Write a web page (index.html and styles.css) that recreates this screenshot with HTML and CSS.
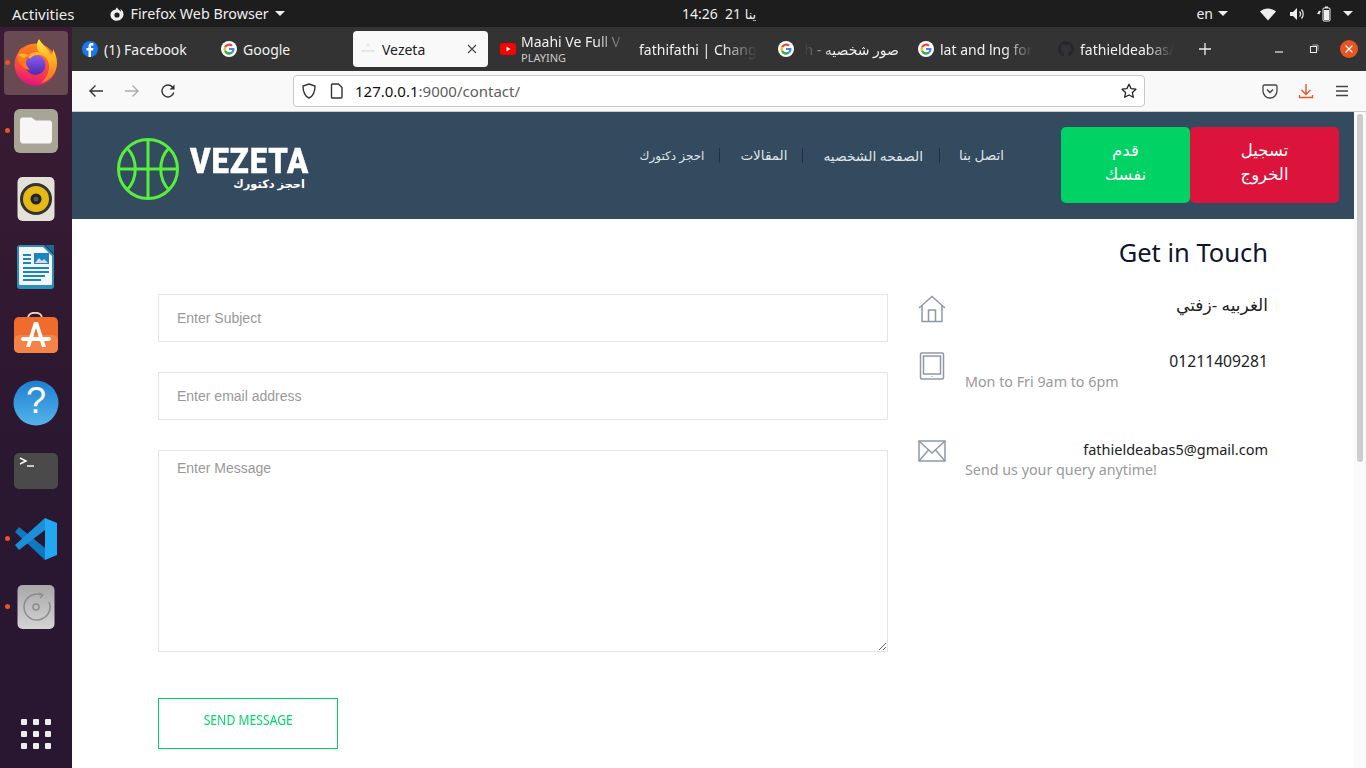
FILE: index.html
```html
<!DOCTYPE html>
<html lang="en">
<head>
    <meta charset="UTF-8">
    <meta name="viewport" content="width=device-width, initial-scale=1.0">
    <title>Vezeta</title>
    <link rel="stylesheet" href="styles.css">
</head>
<body>

    <!-- Top bar -->
    <div class="topbar">
        <div class="topbar-left">
            <span class="activities">Activities</span>
            <span class="app-menu">
                <svg class="app-icon" viewBox="0 0 16 16" width="16" height="16"><path d="M8 1.5c-1 .6-1.300 1.400-1.200 2.200C4.400 3.500 2 5.400 1.500 8c-.5 3.500 2.300 6.800 6.300 6.800 3.700 0 6.700-3 6.700-6.500 0-2.500-1.300-4.600-3.400-5.600.7 1 1 2.100.8 3C11 4.300 9.200 3.800 8 1.500z" fill="#eee"/><circle cx="8" cy="9" r="2.600" fill="#1d1d1d"/></svg>
                <span class="app-name">Firefox Web Browser</span>
                <i class="caret"></i>
            </span>
        </div>
        <div class="clock">14:26 &nbsp;21 <span class="clock-ar">ينا</span></div>
        <div class="topbar-right">
            <span class="lang">en <i class="caret"></i></span>
            <svg class="tray-wifi" viewBox="0 0 16 14" width="16" height="14"><path d="M0 4.500C4.500.5 11.500.5 16 4.500L8 13.500z" fill="#eee"/></svg>
            <svg class="tray-sound" viewBox="0 0 16 14" width="16" height="14"><path d="M1 5h3l4-4v12l-4-4H1z" fill="#eee"/><path d="M10.500 4.500c1.300 1.400 1.300 3.600 0 5M12.500 2.500c2.300 2.500 2.300 6.500 0 9" fill="none" stroke="#eee" stroke-width="1.200"/></svg>
            <svg class="tray-battery" viewBox="0 0 14 16" width="14" height="16"><path d="M3 3 0 8h2v1l2-4H2z" fill="#eee"/><rect x="6" y="2" width="7" height="13" rx="1" fill="none" stroke="#eee"/><rect x="8" y="0.500" width="3" height="1.500" fill="#eee"/><rect x="7" y="4" width="5" height="10" fill="#eee"/></svg>
            <i class="caret"></i>
        </div>
    </div>

    <div class="desktop">
        <!-- Dock -->
        <div class="dock">
            <div class="dock-item dock-active running">
                <svg viewBox="0 0 48 48" width="48" height="48">
                    <defs>
                        <linearGradient id="ffBody" x1="0.600" y1="0" x2="0.400" y2="1"><stop offset="0" stop-color="#ff8a16"/><stop offset="0.550" stop-color="#ff4a3d"/><stop offset="1" stop-color="#e3137f"/></linearGradient>
                        <linearGradient id="ffFlame" x1="0.400" y1="0" x2="0.600" y2="1"><stop offset="0" stop-color="#ffe13c"/><stop offset="0.600" stop-color="#ffa81f"/><stop offset="1" stop-color="#ff6a1f"/></linearGradient>
                        <linearGradient id="ffInner" x1="0.500" y1="0" x2="0.500" y2="1"><stop offset="0" stop-color="#8f5df2"/><stop offset="1" stop-color="#4a2bb0"/></linearGradient>
                    </defs>
                    <circle cx="23.500" cy="25.500" r="21" fill="url(#ffBody)"/>
                    <path d="M27 0c-3 5-3 10 1 14 6 3 10 9 9 16-1 6-4 10-8 14 9-2 16-10 16-20 0-6-2-10-4-14 0 3-1 5-2 6C37 10 31 7 27 0z" fill="url(#ffFlame)"/>
                    <circle cx="23.500" cy="26" r="10" fill="url(#ffInner)"/>
                    <path d="M16 17c3-4 9-5 13-3 4 1 7 4 8 8-3-4-8-7-12-6-3 0-6 2-7 4z" fill="#ffb52e"/>
                    <path d="M10.500 8c-1 3-1 6 0 8 2-1 6-1 8.500 0-2 1-4 2-5 4-1 4 1 8 4 11-6-1-10-5-12-11-1-4 1-9 4.500-12z" fill="#ff7a1a"/>
                    <path d="M6 16c3-2 7-2 11 0-2 1-4 2-5 3-2-1-4-2-6-3z" fill="#ffb52e"/>
                </svg>
            </div>
            <div class="dock-item running">
                <svg viewBox="0 0 46 46" width="46" height="46">
                    <rect x="1" y="1" width="44" height="44" rx="6" fill="#a8a596"/>
                    <path d="M7 12c0-1.500 1-2.500 2.500-2.500h9l4 3h14c1.500 0 2.500 1 2.500 2.500v17c0 2-1 3.500-3 3.500H10c-2 0-3-1.500-3-3.500z" fill="#f7f6f4"/>
                </svg>
            </div>
            <div class="dock-item">
                <svg viewBox="0 0 38 46" width="38" height="46">
                    <rect x="0.500" y="1" width="37" height="44" rx="5" fill="#e4e1d8"/>
                    <circle cx="19" cy="23" r="16" fill="#333"/>
                    <circle cx="19" cy="23" r="13" fill="#e6b914"/>
                    <circle cx="19" cy="23" r="5.500" fill="#222"/>
                    <circle cx="19" cy="23" r="2.500" fill="#555"/>
                </svg>
            </div>
            <div class="dock-item">
                <svg viewBox="0 0 38 46" width="38" height="46">
                    <path d="M3 1h24l10 10v31c0 2-1 3-3 3H3c-2 0-3-1-3-3V4c0-2 1-3 3-3z" fill="#2a8fbd"/>
                    <path d="M3 3h23l9 9v28c0 1-1 1-2 1H4c-1 0-2 0-2-1V4c0-1 0-1 1-1z" fill="#f4f6f7"/>
                    <path d="M28 1h9v9z" fill="#1b6a90"/>
                    <path d="M6 10h8v2H6zM6 14h8v2H6zM6 18h8v2H6zM6 23h26v2H6zM6 27h26v2H6zM6 31h22v2H6zM6 35h18v2H6z" fill="#1a86c0"/>
                    <rect x="17" y="9" width="15" height="11" fill="#1a86c0"/>
                    <path d="M18 19l4-5 3 3 2-2 4 4z" fill="#ddd"/>
                </svg>
            </div>
            <div class="dock-item">
                <svg viewBox="0 0 46 46" width="46" height="46">
                    <path d="M15 6c0-7 14-7 14 0" fill="none" stroke="#ecd6bc" stroke-width="2"/>
                    <rect x="1" y="5" width="44" height="36" rx="5" fill="#ef6c2c"/>
                    <rect x="1" y="23" width="44" height="18" rx="5" fill="#f58347"/>
                    <path d="M21 10h4l8 25h-4l-6-19-6 19h-4z" fill="#fff"/>
                    <rect x="8" y="25" width="30" height="4" rx="2" fill="#fff"/>
                </svg>
            </div>
            <div class="dock-item">
                <svg viewBox="0 0 46 46" width="46" height="46">
                    <defs><linearGradient id="helpBg" x1="0" y1="0" x2="0" y2="1"><stop offset="0" stop-color="#1c7fd0"/><stop offset="1" stop-color="#55b4ea"/></linearGradient></defs>
                    <circle cx="23" cy="23" r="22.500" fill="url(#helpBg)"/>
                    <text class="help-mark" x="23" y="33" text-anchor="middle">?</text>
                </svg>
            </div>
            <div class="dock-item">
                <svg viewBox="0 0 46 38" width="46" height="38">
                    <rect x="1" y="1" width="44" height="36" rx="5" fill="#4a4a4a"/>
                    <path d="M7 6l6 3-6 3" fill="none" stroke="#fff" stroke-width="1.400"/>
                    <path d="M14 14h7" stroke="#fff" stroke-width="1.400"/>
                </svg>
            </div>
            <div class="dock-item running">
                <svg viewBox="0 0 44 44" width="44" height="44">
                    <path d="M1 15l4-5 26 21v12z" fill="#0f78c0"/>
                    <path d="M31 1 1 28l4 5 26-20z" fill="#1b8fd8"/>
                    <path d="M31 1 43 6v32l-12 5z" fill="#22a7f2"/>
                </svg>
            </div>
            <div class="dock-item running">
                <svg viewBox="0 0 38 46" width="38" height="46">
                    <defs><linearGradient id="diskBg" x1="0" y1="0" x2="0" y2="1"><stop offset="0" stop-color="#a8a8a8"/><stop offset="1" stop-color="#d4d4d4"/></linearGradient></defs>
                    <rect x="0.500" y="1" width="37" height="44" rx="5" fill="url(#diskBg)"/>
                    <path d="M25 11a13 13 0 1 0 7 7" fill="none" stroke="#8c8c8c" stroke-width="1.500"/>
                    <path d="M22 9l4 2-3 3" fill="none" stroke="#8c8c8c" stroke-width="1.200"/>
                    <circle cx="19" cy="23" r="3" fill="none" stroke="#8c8c8c" stroke-width="1.500"/>
                </svg>
            </div>
            <div class="dock-grid">
                <i></i><i></i><i></i><i></i><i></i><i></i><i></i><i></i><i></i>
            </div>
        </div>

        <div class="browser">
            <!-- Tabs -->
            <div class="tabs">
                <div class="tab">
                    <svg class="fav" viewBox="0 0 16 16" width="16" height="16"><circle cx="8" cy="8" r="8" fill="#1877f2"/><path d="M9 16V9.500h2l.4-2.500H9V5.600c0-.8.3-1.200 1.200-1.200h1.200V2.200C11 2.100 10.400 2 9.700 2 7.800 2 6.500 3.200 6.500 5.300V7h-2v2.500h2V16z" fill="#fff"/></svg>
                    <span class="tab-title">(1) Facebook</span>
                </div>
                <div class="tab">
                    <svg class="fav" viewBox="0 0 16 16" width="16" height="16"><use href="#gicon"/></svg>
                    <span class="tab-title">Google</span>
                </div>
                <div class="tab tab-current">
                    <svg class="fav" viewBox="0 0 16 16" width="16" height="16"><circle cx="8" cy="4" r="1.500" fill="#e6e6e6"/><path d="M1 9h14v2H1z" fill="#e6e6e6"/></svg>
                    <span class="tab-title tab-title-current">Vezeta</span>
                    <svg class="tab-close" viewBox="0 0 10 10" width="10" height="10"><path d="M1 1l8 8M9 1l-8 8" stroke="#444" stroke-width="1.100"/></svg>
                </div>
                <div class="tab tab-media">
                    <svg class="fav" viewBox="0 0 16 16" width="16" height="16"><rect y="2" width="16" height="12" rx="3" fill="#f00"/><path d="M6.500 5.500v5l4-2.500z" fill="#fff"/></svg>
                    <span class="tab-stack">
                        <span class="tab-title fade">Maahi Ve Full V</span>
                        <span class="tab-sub">PLAYING</span>
                    </span>
                </div>
                <div class="tab tab-nofav">
                    <span class="tab-title fade">fathifathi | Chang</span>
                </div>
                <div class="tab tab-wide">
                    <svg class="fav" viewBox="0 0 16 16" width="16" height="16"><use href="#gicon"/></svg>
                    <span class="tab-title fade-start" dir="ltr">h - صور شخصيه</span>
                </div>
                <div class="tab tab-wide">
                    <svg class="fav" viewBox="0 0 16 16" width="16" height="16"><use href="#gicon"/></svg>
                    <span class="tab-title fade">lat and lng for</span>
                </div>
                <div class="tab">
                    <svg class="fav" viewBox="0 0 16 16" width="16" height="16"><path d="M8 0a8 8 0 0 0-2.500 15.600c.4.100.5-.2.500-.4v-1.400c-2.200.5-2.700-1-2.700-1-.4-.9-.9-1.200-.9-1.200-.7-.5.100-.5.100-.5.800.1 1.200.8 1.200.8.700 1.200 1.900.9 2.300.7.100-.5.300-.9.500-1.100-1.800-.2-3.600-.9-3.600-4 0-.9.300-1.600.8-2.100-.1-.2-.4-1 .1-2.100 0 0 .7-.2 2.200.8a7.600 7.600 0 0 1 4 0c1.500-1 2.200-.8 2.200-.8.400 1.100.2 1.900.1 2.100.5.600.8 1.300.8 2.100 0 3.100-1.900 3.700-3.700 3.900.3.300.6.800.6 1.500v2.200c0 .2.100.5.600.4A8 8 0 0 0 8 0z" fill="#24292e"/></svg>
                    <span class="tab-title fade">fathieldeabas/</span>
                </div>
                <svg class="tab-new" viewBox="0 0 14 14" width="14" height="14"><path d="M7 1v12M1 7h12" stroke="#eee" stroke-width="1.300"/></svg>
                <div class="win-controls">
                    <svg class="win-min" viewBox="0 0 10 10" width="10" height="10"><path d="M1 8h8" stroke="#eee" stroke-width="1.200"/></svg>
                    <svg class="win-max" viewBox="0 0 10 10" width="10" height="10"><rect x="1.500" y="2.500" width="6" height="6" fill="none" stroke="#eee"/><path d="M3.500 1h5.500v5.500" fill="none" stroke="#aaa"/></svg>
                    <span class="win-close">
                        <svg viewBox="0 0 10 10" width="10" height="10"><path d="M1.500 1.500l7 7M8.500 1.500l-7 7" stroke="#fff" stroke-width="1.200"/></svg>
                    </span>
                </div>
            </div>

            <!-- Toolbar -->
            <div class="toolbar">
                <svg class="tool tool-back" viewBox="0 0 16 16" width="16" height="16"><path d="M15 8H2M7.500 2.500 2 8l5.500 5.500" fill="none" stroke="#333" stroke-width="1.400"/></svg>
                <svg class="tool tool-fwd" viewBox="0 0 16 16" width="16" height="16"><path d="M1 8h13M8.500 2.500 14 8l-5.500 5.500" fill="none" stroke="#aaa" stroke-width="1.400"/></svg>
                <svg class="tool tool-reload" viewBox="0 0 16 16" width="16" height="16"><path d="M13.800 9.500A6 6 0 1 1 12.500 4L14 5.500" fill="none" stroke="#333" stroke-width="1.400"/><path d="M14.500 1.500v5h-5z" fill="#333"/></svg>
                <div class="urlbar">
                    <svg class="url-shield" viewBox="0 0 16 16" width="16" height="16"><path d="M8 1l6 2c0 6-1.500 10-6 12C3.500 13 2 9 2 3z" fill="none" stroke="#333" stroke-width="1.400"/></svg>
                    <svg class="url-page" viewBox="0 0 14 16" width="14" height="16"><path d="M2.500 1h6l3.500 3.500V14a1 1 0 0 1-1 1h-8.500a1 1 0 0 1-1-1V2a1 1 0 0 1 1-1z" fill="none" stroke="#333" stroke-width="1.400"/></svg>
                    <span class="url-text"><b>127.0.0.1</b>:9000/contact/</span>
                    <svg class="url-star" viewBox="0 0 16 16" width="16" height="16"><path d="M8 1.200l2.100 4.400 4.800.6-3.500 3.300.9 4.800L8 12l-4.300 2.300.9-4.800L1.100 6.200l4.800-.6z" fill="none" stroke="#222" stroke-width="1.300" stroke-linejoin="round"/></svg>
                </div>
                <div class="tool-right">
                    <svg viewBox="0 0 16 16" width="16" height="16"><path d="M2.500 2h11a1.500 1.500 0 0 1 1.500 1.500V8a7 7 0 0 1-14 0V3.500A1.500 1.500 0 0 1 2.500 2z" fill="none" stroke="#444" stroke-width="1.300"/><path d="M5 6.500 8 9.500l3-3" fill="none" stroke="#444" stroke-width="1.500"/></svg>
                    <svg viewBox="0 0 16 16" width="16" height="16"><path d="M8 1v10M3.500 7 8 11.500 12.500 7M1.500 12v2.500h13V12" fill="none" stroke="#e8572a" stroke-width="1.400"/></svg>
                    <svg viewBox="0 0 16 16" width="16" height="16"><path d="M2 3.500h12M2 8h12M2 12.500h12" stroke="#444" stroke-width="1.400"/></svg>
                </div>
            </div>

            <!-- Page -->
            <div class="viewport">
                <div class="page">
                    <header class="site-header">
                        <div class="logo">
                            <svg class="logo-ball" viewBox="0 0 64 64" width="64" height="64" fill="none" stroke="#54f03c" stroke-width="3">
                                <circle cx="32" cy="32" r="29.500"/>
                                <path d="M32 2.500v59M2.500 32h59"/>
                                <path d="M11 11c11 11 11 31 0 42M53 11c-11 11-11 31 0 42"/>
                            </svg>
                            <div class="logo-text">
                                <span class="logo-name">VEZETA</span>
                                <span class="logo-sub">احجز دكتورك</span>
                            </div>
                        </div>
                        <nav class="nav">
                            <a class="nav-link nav-link-first">اتصل بنا</a>
                            <a class="nav-link nav-link-wide">الصفحه الشخصيه</a>
                            <a class="nav-link">المقالات</a>
                            <a class="nav-link nav-link-small">احجز دكتورك</a>
                        </nav>
                        <div class="header-btns">
                            <a class="btn-green">قدم<br>نفسك</a>
                            <a class="btn-red">تسجيل<br>الخروج</a>
                        </div>
                    </header>

                    <main class="contact">
                        <h2 class="contact-title">Get in Touch</h2>
                        <div class="contact-row">
                            <form class="contact-form">
                                <input class="field" type="text" placeholder="Enter Subject">
                                <input class="field" type="text" placeholder="Enter email address">
                                <textarea class="field field-area" placeholder="Enter Message"></textarea>
                                <button class="send-btn" type="button"><span class="send-label">SEND MESSAGE</span></button>
                            </form>
                            <div class="contact-info">
                                <div class="info-item info-address">
                                    <svg class="info-icon" viewBox="0 0 28 28" width="28" height="28" fill="none" stroke="#8f99a6" stroke-width="1.500"><path d="M1 13 14 1.500 27 13"/><path d="M4 10.500V26.500h20V10.500"/><path d="M10.500 26.500V15h7v11.500"/></svg>
                                    <div class="info-body">
                                        <div class="info-main main-address">الغربيه -زفتي</div>
                                    </div>
                                </div>
                                <div class="info-item info-phone">
                                    <svg class="info-icon" viewBox="0 0 28 28" width="28" height="28" fill="none" stroke="#8f99a6" stroke-width="1.500"><rect x="2.500" y="1" width="23" height="26" rx="1.500"/><rect x="5.500" y="4" width="17" height="18"/><path d="M14 24.200v.8"/></svg>
                                    <div class="info-body">
                                        <div class="info-main main-phone">01211409281</div>
                                        <div class="info-sub">Mon to Fri 9am to 6pm</div>
                                    </div>
                                </div>
                                <div class="info-item">
                                    <svg class="info-icon" viewBox="0 0 28 22" width="28" height="22" fill="none" stroke="#8f99a6" stroke-width="1.500"><rect x="1" y="1" width="26" height="20"/><path d="M1 1l13 12L27 1M1 21l9.500-11M27 21 17.500 10"/></svg>
                                    <div class="info-body">
                                        <div class="info-main main-email">fathieldeabas5@gmail.com</div>
                                        <div class="info-sub">Send us your query anytime!</div>
                                    </div>
                                </div>
                            </div>
                        </div>
                    </main>
                </div>
                <div class="scrollbar"><div class="scroll-thumb"></div></div>
            </div>
        </div>
    </div>

    <!-- shared google favicon -->
    <svg class="defs" width="0" height="0">
        <defs>
            <g id="gicon">
                <circle cx="8" cy="8" r="8" fill="#fff"/>
                <path d="M3.100 5.500A5.500 5.500 0 0 1 11.700 4L10.300 5.400A3.500 3.500 0 0 0 5 6.700z" fill="#ea4335"/>
                <path d="M3.100 5.500 5 6.700a3.500 3.500 0 0 0 0 2.600l-1.900 1.300a5.500 5.500 0 0 1 0-5.100z" fill="#fbbc05"/>
                <path d="M3.100 10.600 5 9.300a3.500 3.500 0 0 0 5.200 1.400l1.800 1.400a5.500 5.500 0 0 1-8.900-1.500z" fill="#34a853"/>
                <path d="M13.500 8c0 1.700-.6 3.100-1.500 4.100l-1.800-1.400c.5-.4.900-1 1-1.700H8V7h5.400c.1.300.1.600.1 1z" fill="#4285f4"/>
            </g>
        </defs>
    </svg>

</body>
</html>
```

FILE: styles.css
```css
* {
    box-sizing: border-box;
}
html, body {
    margin: 0;
    height: 768px;
    overflow: hidden;
}
body {
    font-family: "Noto Sans", "DejaVu Sans", sans-serif;
    background-color: #2c1a2c;
}
svg {
    display: block;
    flex: none;
}
.defs {
    position: absolute;
}

/* top bar */
.topbar {
    height: 27px;
    background-color: #1d1d1d;
    color: #eee;
    font-size: 14px;
    display: grid;
    grid-template-columns: 670px auto 1fr;
    align-items: center;
    padding: 0 12px;
}
.topbar-left {
    display: flex;
    align-items: center;
    gap: 34px;
}
.activities {
    font-size: 15px;
}
.app-menu {
    display: flex;
    align-items: center;
    gap: 6px;
}
.app-name {
    font-size: 14.300px;
}
.caret {
    display: inline-block;
    width: 0;
    height: 0;
    border-left: 5px solid transparent;
    border-right: 5px solid transparent;
    border-top: 5px solid #eee;
}
.clock {
    font-size: 14px;
}
.clock-ar {
    font-size: 13px;
}
.topbar-right {
    display: flex;
    align-items: center;
    justify-content: flex-end;
    padding-right: 1px;
}
.lang {
    display: flex;
    align-items: center;
    gap: 5px;
    margin-right: 32px;
}
.tray-wifi {
    margin-right: 13px;
}
.tray-sound {
    margin-right: 12px;
}
.tray-battery {
    margin-right: 12px;
}

.desktop {
    display: flex;
    height: 741px;
}

/* dock */
.dock {
    width: 72px;
    flex: none;
    background: linear-gradient(#3b1c33, #2a1730 60%, #291631);
    display: flex;
    flex-direction: column;
    align-items: center;
    padding: 4px 0 19px;
}
.dock-item {
    width: 64px;
    height: 64px;
    margin-bottom: 4px;
    border-radius: 4px;
    display: flex;
    align-items: center;
    justify-content: center;
    position: relative;
}
.dock-active {
    background-color: #6a4a52;
}
.running::before {
    content: "";
    position: absolute;
    left: 1px;
    top: 29px;
    width: 5px;
    height: 5px;
    border-radius: 50%;
    background-color: #e95420;
}
.help-mark {
    font-size: 36px;
    font-family: "Liberation Sans", sans-serif;
    fill: #fff;
}
.dock-grid {
    margin-top: auto;
    display: grid;
    grid-template-columns: repeat(3, 6px);
    grid-auto-rows: 6px;
    gap: 6px;
}
.dock-grid i {
    background-color: #eee;
    border-radius: 1px;
}

.browser {
    flex: 1;
    min-width: 0;
    display: flex;
    flex-direction: column;
}

/* tabs */
.tabs {
    height: 44px;
    background-color: #333333;
    display: flex;
    align-items: center;
    color: #f1f1f1;
    font-size: 14px;
    padding-left: 2px;
}
.tab {
    width: 139px;
    flex: none;
    height: 36px;
    display: flex;
    align-items: center;
    gap: 6px;
    padding: 0 8px;
    overflow: hidden;
}
.tab-wide {
    width: 140px;
}
.tab-current {
    width: 135px;
    margin-left: 1px;
    margin-right: 4px;
    background-color: #f9f9fa;
    color: #222;
    border-radius: 4px;
    padding-left: 7px;
    padding-right: 11px;
}
.tab-close {
    margin-left: auto;
}
.tab-title {
    white-space: nowrap;
    overflow: hidden;
    min-width: 0;
}
.tab-title-current {
    flex: none;
}
.fade {
    -webkit-mask-image: linear-gradient(to right, #000 70%, transparent 100%);
    mask-image: linear-gradient(to right, #000 70%, transparent 100%);
}
.fade-start {
    margin-left: auto;
    padding-right: 3px;
    -webkit-mask-image: linear-gradient(to right, transparent, #000 30%);
    mask-image: linear-gradient(to right, transparent, #000 30%);
}
.tab-media {
    gap: 5px;
    padding-right: 4px;
}
.tab-stack {
    display: flex;
    flex-direction: column;
    min-width: 0;
    flex: 1;
}
.tab-stack .tab-title {
    line-height: 20px;
    margin-top: -3px;
    margin-bottom: -2px;
}
.tab-sub {
    font-size: 11px;
    line-height: 13px;
    margin-top: 1px;
    color: #ccc;
}
.tab-nofav {
    padding-left: 8px;
}
.tab-new {
    margin-left: 9px;
}
.win-controls {
    display: flex;
    align-items: center;
    margin-left: auto;
    padding-right: 8px;
}
.win-max {
    margin-left: 25px;
}
.win-close {
    width: 18px;
    height: 18px;
    margin-left: 21px;
    border-radius: 50%;
    background-color: #e95420;
    display: flex;
    align-items: center;
    justify-content: center;
}

/* toolbar */
.toolbar {
    height: 41px;
    background-color: #f9f9fa;
    border-bottom: 1px solid #ccc;
    display: flex;
    align-items: center;
    padding-left: 16px;
}
.tool-fwd {
    margin-left: 20px;
}
.tool-reload {
    margin-left: 20px;
}
.urlbar {
    width: 852px;
    height: 32px;
    margin-left: 117px;
    background-color: #fff;
    border: 1px solid #c8c8c8;
    border-radius: 4px;
    display: flex;
    align-items: center;
    padding: 0 7px;
    font-size: 15px;
}
.url-page {
    margin-left: 13px;
}
.url-text {
    margin-left: 11px;
    color: #5e5e5e;
    flex: 1;
}
.url-text b {
    font-weight: 400;
    color: #111;
}
.tool-right {
    display: flex;
    align-items: center;
    gap: 20px;
    margin-left: 117px;
}

/* page */
.viewport {
    flex: 1;
    min-height: 0;
    display: flex;
    background-color: #fff;
}
.page {
    flex: 1;
    min-width: 0;
}
.scrollbar {
    width: 12px;
    background-color: #fafafa;
    padding: 2px 3px 0;
}
.scroll-thumb {
    height: 348px;
    background-color: #cdcdcd;
    border-radius: 3px;
}

/* site header */
.site-header {
    height: 107px;
    background-color: #344a5f;
    display: flex;
    align-items: flex-start;
    padding: 15px 15px 0 44px;
    color: #fff;
}
.logo {
    display: flex;
    align-items: center;
    gap: 9px;
    margin-top: 10px;
}
.logo-text {
    width: 118px;
    display: flex;
    flex-direction: column;
    align-items: flex-end;
}
.logo-name {
    align-self: flex-start;
    margin-left: 1px;
    font-family: "Roboto", sans-serif;
    font-weight: 900;
    font-size: 35px;
    line-height: 28px;
    letter-spacing: 1px;
    white-space: nowrap;
    -webkit-text-stroke: 0.4px #fff;
    transform: scaleX(0.89);
    transform-origin: left center;
}
.logo-sub {
    font-size: 11.400px;
    line-height: 14px;
    font-weight: 700;
    margin-right: 2px;
    margin-top: 1px;
}
.nav {
    margin-left: auto;
    display: flex;
    flex-direction: row;
    direction: rtl;
    margin-top: 6px;
    height: 44px;
    align-items: center;
    font-size: 13.500px;
    color: #dfe4e8;
}
.nav-link {
    padding: 0 15px 0 20px;
    border-left: 1px solid #222f3d;
    line-height: 15px;
    white-space: nowrap;
}
.nav-link-first {
    padding: 0 0 0 19px;
}
.nav-link-wide {
    font-size: 13.800px;
    padding-right: 16px;
}
.nav-link-small {
    font-size: 12px;
    border-left: none;
    padding-left: 0;
}
.header-btns {
    display: flex;
    margin-left: 57px;
}
.btn-green, .btn-red {
    height: 76px;
    border-radius: 5px;
    text-align: center;
    font-size: 16.500px;
    line-height: 24px;
    padding-top: 11px;
    color: #fff;
}
.btn-green {
    width: 129px;
    background-color: #00d363;
}
.btn-red {
    width: 149px;
    background-color: #dc143c;
}

/* contact */
.contact {
    padding: 0 86px;
}
.contact-title {
    margin: 0;
    height: 75px;
    padding-top: 15px;
    font-size: 25.500px;
    line-height: 36px;
    font-weight: 400;
    text-align: right;
    color: #0d1530;
}
.contact-row {
    display: flex;
    gap: 30px;
}
.contact-form {
    width: 730px;
    flex: none;
    display: flex;
    flex-direction: column;
}
.field {
    display: block;
    width: 100%;
    height: 48px;
    margin-bottom: 30px;
    border: 1px solid #e5e5e5;
    padding: 0 18px;
    font-family: "Liberation Sans", sans-serif;
    font-size: 14px;
    color: #333;
    background-color: #fff;
    outline: none;
}
.field::placeholder {
    color: #999;
}
.field-area {
    height: 202px;
    padding-top: 9px;
    margin-bottom: 46px;
}
.send-btn {
    width: 180px;
    height: 51px;
    background-color: #fff;
    border: 1px solid #00d363;
    color: #00d968;
    font-family: "Noto Sans", sans-serif;
    font-size: 14px;
    padding: 0 0 9px;
}
.send-label {
    display: inline-block;
    transform: scaleX(0.87);
}
.contact-info {
    width: 350px;
    flex: none;
}
.info-item {
    display: flex;
    gap: 19px;
}
.info-icon {
    margin-top: 1px;
}
.info-address {
    height: 57px;
}
.info-phone {
    height: 88px;
}
.info-body {
    flex: 1;
    min-width: 0;
}
.info-main {
    line-height: 22px;
    margin-top: -1px;
    margin-bottom: 1px;
    text-align: right;
    color: #222;
}
.main-address {
    font-size: 17px;
    margin-top: 0;
}
.main-phone {
    font-size: 15.700px;
}
.main-email {
    font-size: 14.500px;
}
.info-sub {
    font-size: 14.300px;
    line-height: 18px;
    color: #999;
}
```
